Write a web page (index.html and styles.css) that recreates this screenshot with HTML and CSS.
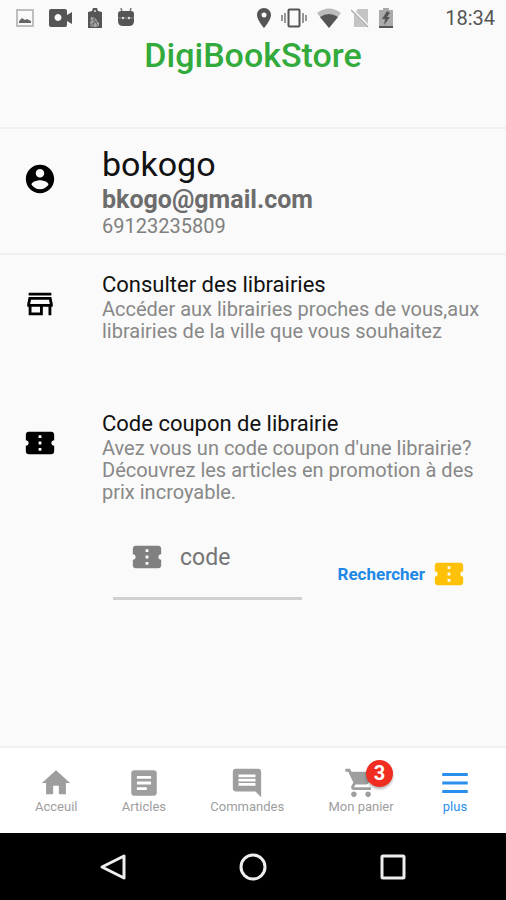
FILE: index.html
```html
<!DOCTYPE html>
<html lang="fr">
<head>
<meta charset="utf-8">
<meta name="viewport" content="width=device-width, initial-scale=1">
<title>DigiBookStore</title>
<link rel="stylesheet" href="styles.css">
</head>
<body>
<svg class="defs" aria-hidden="true">
  <symbol id="ticket" viewBox="0 0 24 24"><path d="M22 10V6c0-1.11-.9-2-2-2H4c-1.1 0-1.99.89-1.99 2v4c1.1 0 1.99.9 1.99 2s-.89 2-2 2v4c0 1.1.9 2 2 2h16c1.1 0 2-.9 2-2v-4c-1.1 0-2-.9-2-2s.9-2 2-2zm-9 7.5h-2v-2h2v2zm0-4.5h-2v-2h2v2zm0-4.5h-2v-2h2v2z"/></symbol>
</svg>
<div class="status">
  <div class="status-left">
    <svg width="18" height="20" viewBox="0 0 18 20"><rect x="1" y="2" width="16" height="16" fill="none" stroke="#aaa" stroke-width="1.5"/><path d="M3 15v-2l3-3 3 2 2-1 4 2v2z" fill="#666"/></svg>
    <svg width="24" height="20" viewBox="0 0 24 20"><path fill-rule="evenodd" d="M2 1h14q2 0 2 2v4l5-3v12l-5-3v4q0 2-2 2H2q-2 0-2-2V3q0-2 2-2zm7 5a3.500 3.500 0 1 0 .01 0z" fill="#555"/></svg>
    <svg width="14" height="20" viewBox="0 0 14 20"><path d="M0 4l4-1 1-3h4l1 3 4 1v16H0z" fill="#555"/><path d="M3 9l4 1 4 5v3l-4 1-5-1z" fill="#aaa"/><path d="M3 13l3-2 4 7M2 17l8-4M5 18l2-8" stroke="#666" fill="none"/><circle cx="7" cy="3" r="1" fill="#ddd"/></svg>
    <svg width="18" height="20" viewBox="0 0 18 20"><path d="M4 0l1 4M14 0l-1 4" stroke="#777" stroke-width="1.500"/><path d="M1 6q0-3 3-3h10q3 0 3 3v7q0 5-5 5H6q-5 0-5-5z" fill="#555"/><path d="M1 10h16" stroke="#888"/><circle cx="6" cy="10" r="1.200" fill="#ddd"/><circle cx="12" cy="10" r="1.200" fill="#ddd"/></svg>
  </div>
  <div class="status-right">
    <svg width="14" height="20" viewBox="0 0 14 20"><path d="M7 0C3 0 0 3 0 7c0 5 7 13 7 13s7-8 7-13c0-4-3-7-7-7zm0 4.500a2.500 2.500 0 1 1 0 5 2.500 2.500 0 0 1 0-5z" fill="#555"/></svg>
    <svg width="26" height="20" viewBox="0 0 26 20"><rect x="7.500" y="1.500" width="11" height="17" rx="1" fill="none" stroke="#555" stroke-width="2"/><path d="M4 5v10M22 5v10M1 7v6M25 7v6" stroke="#777" stroke-width="1.500"/></svg>
    <svg width="24" height="20" viewBox="0 0 24 20"><path d="M0 5Q12-4 24 5L12 20z" fill="#bbb"/><path d="M3 9q9-6 18 0l-9 11z" fill="#555"/></svg>
    <svg width="18" height="20" viewBox="0 0 18 20"><path d="M7 1h10v18H3V6z" fill="#c4c4c4"/><path d="M0 1l18 18" stroke="#fafafa" stroke-width="3"/><path d="M0 2l17 17" stroke="#aaa" stroke-width="1.500"/></svg>
    <svg width="14" height="20" viewBox="0 0 14 20"><path d="M0 2h4V0h6v2h4v18H0z" fill="#aaa"/><path d="M0 18h14v2H0z" fill="#555"/><path d="M8 3l-5 8h3l-1 6 6-8H8l3-4z" fill="#555"/></svg>
    <time>18:34</time>
  </div>
</div>
<header><h1>DigiBookStore</h1></header>
<main>
  <section class="row account">
    <svg class="icon" viewBox="0 0 24 24"><path d="M12 2C6.480 2 2 6.480 2 12s4.480 10 10 10 10-4.480 10-10S17.520 2 12 2zm0 3c1.660 0 3 1.340 3 3s-1.340 3-3 3-3-1.340-3-3 1.340-3 3-3zm0 14.200c-2.500 0-4.710-1.280-6-3.220.03-1.990 4-3.080 6-3.080 1.990 0 5.970 1.090 6 3.080-1.290 1.940-3.500 3.220-6 3.220z"/></svg>
    <div>
      <p class="name">bokogo</p>
      <p class="mail">bkogo@gmail.com</p>
      <p class="phone">69123235809</p>
    </div>
  </section>
  <section class="row">
    <svg class="icon" viewBox="0 0 24 24"><path d="M18.360 9l.6 3H5.040l.6-3h12.720M20 4H4v2h16V4zm0 3H4l-1 5v2h1v6h10v-6h4v6h2v-6h1v-2l-1-5zM6 18v-4h6v4H6z"/></svg>
    <div>
      <h2>Consulter des librairies</h2>
      <p class="text">Accéder aux librairies proches de vous,aux librairies de la ville que vous souhaitez</p>
    </div>
  </section>
  <section class="row coupon">
    <svg class="icon"><use href="#ticket"/></svg>
    <div>
      <h2>Code coupon de librairie</h2>
      <p class="text">Avez vous un code coupon d'une librairie? Découvrez les articles en promotion à des prix incroyable.</p>
    </div>
  </section>
  <form class="search">
    <label class="field">
      <svg class="icon"><use href="#ticket"/></svg>
      <input type="text" placeholder="code" aria-label="code">
    </label>
    <button type="button">Rechercher <svg class="icon"><use href="#ticket"/></svg></button>
  </form>
</main>
<nav class="tabs">
  <a href="#"><svg class="icon" viewBox="0 0 24 24"><path d="M10 20v-6h4v6h5v-8h3L12 3 2 12h3v8z"/></svg>Acceuil</a>
  <a href="#"><svg class="icon" viewBox="0 0 24 24"><path d="M19 3H5c-1.100 0-2 .9-2 2v14c0 1.100.9 2 2 2h14c1.100 0 2-.9 2-2V5c0-1.100-.9-2-2-2zm-5 14H7v-2h7v2zm3-4H7v-2h10v2zm0-4H7V7h10v2z"/></svg>Articles</a>
  <a href="#"><svg class="icon" viewBox="0 0 24 24"><path d="M21.990 4c0-1.100-.89-2-1.990-2H4c-1.100 0-2 .9-2 2v12c0 1.100.9 2 2 2h14l4 4-.01-18zM18 14H6v-2h12v2zm0-3H6V9h12v2zm0-3H6V6h12v2z"/></svg>Commandes</a>
  <a href="#"><span class="cart"><svg class="icon" viewBox="0 0 24 24"><path d="M7 18c-1.100 0-1.990.9-1.990 2S5.900 22 7 22s2-.9 2-2-.9-2-2-2zM1 2v2h2l3.600 7.590-1.350 2.450c-.16.28-.25.61-.25.96 0 1.100.9 2 2 2h12v-2H7.420c-.14 0-.25-.11-.25-.25l.03-.12.9-1.630h7.450c.75 0 1.410-.41 1.750-1.030l3.580-6.490c.08-.14.12-.31.12-.48 0-.55-.45-1-1-1H5.210l-.94-2H1zm16 16c-1.100 0-1.990.9-1.990 2s.89 2 1.990 2 2-.9 2-2-.9-2-2-2z"/></svg><span class="badge">3</span></span>Mon panier</a>
  <a href="#" class="active" aria-current="page"><svg class="icon" viewBox="0 0 24 24"><path d="M3 5h18v2H3zm0 6h18v2H3zm0 6h18v2H3z"/></svg>plus</a>
</nav>
<div class="system">
  <button type="button" aria-label="Retour"><svg viewBox="0 0 28 28"><path d="M25 3v22L3 14z"/></svg></button>
  <button type="button" aria-label="Accueil"><svg viewBox="0 0 28 28"><circle cx="14" cy="14" r="12"/></svg></button>
  <button type="button" aria-label="Applications"><svg viewBox="0 0 28 28"><rect x="3" y="3" width="22" height="22" rx="1"/></svg></button>
</div>
</body>
</html>
```
FILE: styles.css
```css
* { box-sizing: border-box; }
body {
  margin: 0;
  min-height: 100vh;
  display: flex;
  flex-direction: column;
  background: #fafafa;
  color: #111;
  font-family: Roboto, "Liberation Sans", sans-serif;
}
h1, h2, p { margin: 0; }
button { border: 0; padding: 0; background: none; font: inherit; }
.defs { display: none; }
.icon { display: block; width: 34px; height: 34px; flex: none; fill: currentColor; }

.status {
  display: flex;
  justify-content: space-between;
  align-items: center;
  height: 36px;
  padding: 0 11px 0 16px;
}
.status-left { display: flex; align-items: center; gap: 15px; }
.status-right { display: flex; align-items: center; gap: 10px; }
.status time { margin-left: 42px; font-size: 20px; color: #555; }

header { height: 93px; border-bottom: 2px solid #f0f0f0; text-align: center; }
h1 { font-size: 34px; line-height: 38px; font-weight: 500; color: #33aa3c; }

main { flex: 1; }
.row {
  display: grid;
  grid-template-columns: 34px 1fr;
  gap: 45px;
  padding: 17px 23px 0;
}
.row .icon { margin-top: 15px; color: #000; }
.account { padding: 15px 23px; border-bottom: 2px solid #f0f0f0; }
.account .icon { margin-top: 18px; }
.name { font-size: 34px; line-height: 40px; }
.mail { font-size: 25px; line-height: 31px; font-weight: 700; color: #6c6c6c; }
.phone { font-size: 20px; line-height: 23px; color: #808080; }
h2 { font-size: 22px; line-height: 26px; font-weight: 400; }
.text { font-size: 20px; line-height: 22px; color: #888; }
.coupon { padding-top: 69px; }

.search {
  display: flex;
  justify-content: space-between;
  align-items: center;
  gap: 36px;
  padding: 21px 40px 0 113px;
}
.field {
  flex: 1;
  min-width: 0;
  display: flex;
  gap: 16px;
  height: 76px;
  padding: 16px 0 0 17px;
  border-bottom: 3px solid #d0d0d0;
  color: #808080;
}
.field input {
  flex: 1;
  min-width: 0;
  height: 34px;
  border: 0;
  padding: 0;
  outline: 0;
  background: none;
  font: inherit;
  font-size: 23px;
}
.field input::placeholder { color: #757575; opacity: 1; }
.search button {
  display: flex;
  align-items: center;
  gap: 7px;
  margin-top: 24px;
  font-size: 17px;
  font-weight: 700;
  color: #1e88e5;
}
.search button .icon { color: #ffc107; }

.tabs {
  display: flex;
  justify-content: space-between;
  height: 87px;
  padding: 18px 34px 0 35px;
  border-top: 2px solid #f0f0f0;
  background: #fff;
}
.tabs a {
  display: flex;
  flex-direction: column;
  align-items: center;
  font-size: 13px;
  line-height: 14px;
  color: #9e9e9e;
  text-decoration: none;
}
.tabs .active { color: #2a8fec; }
.cart { position: relative; }
.badge {
  position: absolute;
  top: -6px;
  left: 22px;
  width: 27px;
  height: 27px;
  border-radius: 50%;
  background: #f02d20;
  box-shadow: 0 2px 3px rgba(0, 0, 0, 0.3);
  color: #fff;
  font-size: 20px;
  line-height: 27px;
  font-weight: 700;
  text-align: center;
}

.system {
  display: flex;
  justify-content: center;
  align-items: center;
  gap: 112px;
  height: 67px;
  background: #000;
}
.system svg { display: block; width: 28px; height: 28px; fill: none; stroke: #eee; stroke-width: 3; stroke-linejoin: round; }
```
